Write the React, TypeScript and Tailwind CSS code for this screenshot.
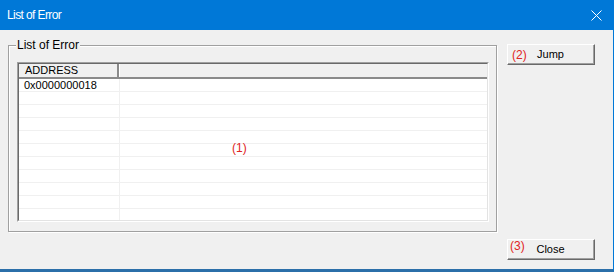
import React from "react";

const ROWS = 11;

function Button({ mark, label, markClass }: { mark: string; label: string; markClass: string }) {
  return (
    <div className="relative w-[88px] h-[21px] border border-t-white border-l-white border-r-[#696969] border-b-[#696969] bg-[#f0f0f0]">
      <div className="w-full h-full border-r border-b border-[#a0a0a0] flex items-center justify-center text-[11px] leading-none text-black">
        {label}
      </div>
      <span className={`absolute text-[12px] leading-none text-[#e02424] ${markClass}`}>{mark}</span>
    </div>
  );
}

export default function App() {
  return (
    <div className="w-[614px] h-[272px] flex flex-col bg-[#f0f0f0] font-['Liberation_Sans',sans-serif] overflow-hidden">
      <div className="h-[30px] shrink-0 bg-[#0078d7] flex items-center justify-between pl-[7px] pr-[12px] text-white">
        <span className="text-[12px] tracking-[-0.6px]">List of Error</span>
        <svg width="11" height="11" viewBox="0 0 11 11" fill="none" stroke="white" strokeWidth={1}>
          <path d="M0.5 0.5 10.5 10.5M10.5 0.5 0.5 10.5" />
        </svg>
      </div>

      <div className="flex flex-1 border-r border-r-[#0078d7] border-b-[3px] border-b-[#2b6fa9]">
        <div className="pl-[8px] pt-[15px]">
          <div className="relative w-[489px] h-[187px] border border-[#a0a0a0] shadow-[inset_1px_1px_0_#fff,1px_1px_0_#fff]">
            <span className="absolute left-[7px] top-[-8px] px-[1px] bg-[#f0f0f0] text-[12px] leading-[14px] text-black">
              List of Error
            </span>
            <div className="ml-[8px] mt-[16px] w-[472px] h-[160px] border border-t-[#a0a0a0] border-l-[#a0a0a0] border-r-white border-b-white">
              <div className="relative w-full h-full border border-t-[#696969] border-l-[#696969] border-r-[#e3e3e3] border-b-[#e3e3e3] bg-white overflow-hidden">
                <div className="flex h-[15px] bg-[#f0f0f0] border-b-2 border-b-[#8a8a8a]">
                  <div className="w-[100px] border-r-2 border-r-[#8a8a8a] pl-[6px] text-[11px] leading-[13px] text-black">
                    ADDRESS
                  </div>
                  <div className="flex-1 border-l border-l-white" />
                </div>
                {Array.from({ length: ROWS }).map((_, i) => (
                  <div key={i} className="flex h-[13px] border-b border-b-[#f0f0f0]">
                    <div className="w-[101px] border-r border-r-[#f0f0f0] pl-[5px] text-[11px] leading-[12px] text-black">
                      {i === 0 ? "0x0000000018" : ""}
                    </div>
                    <div className="flex-1" />
                  </div>
                ))}
                <span className="absolute left-[213px] top-[78px] text-[12px] leading-none text-[#e02424]">(1)</span>
              </div>
            </div>
          </div>
        </div>

        <div className="ml-[10px] pt-[14px] pb-[9px] flex flex-col justify-between">
          <Button mark="(2)" label="Jump" markClass="left-[4px] top-[4px]" />
          <Button mark="(3)" label="Close" markClass="left-[2px] top-[0px]" />
        </div>
      </div>
    </div>
  );
}
